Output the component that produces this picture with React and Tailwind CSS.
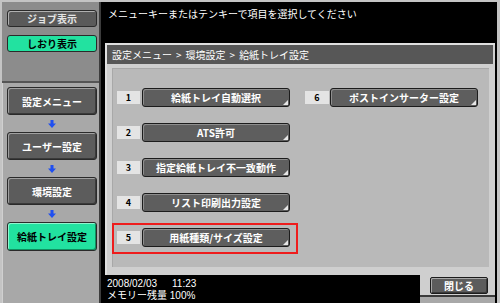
import React from 'react'

const FONT = "font-['Noto_Sans_CJK_JP','Noto_Sans',sans-serif]"

const LEFT_ITEMS = [
  { n: '1', label: '給紙トレイ自動選択' },
  { n: '2', label: 'ATS許可' },
  { n: '3', label: '指定給紙トレイ不一致動作' },
  { n: '4', label: 'リスト印刷出力設定' },
  { n: '5', label: '用紙種類/サイズ設定', marked: true },
]

const NAV = ['設定メニュー', 'ユーザー設定', '環境設定']

function DownArrow() {
  return (
    <svg width="8" height="8" viewBox="0 0 8 8">
      <path d="M2.5 0h3v3.5H8L4 8 0 3.5h2.5z" fill="#1f4ff0" />
    </svg>
  )
}

function SideButton({ children, green, h = 'h-[28px]' }) {
  return (
    <div
      className={`w-[90px] ${h} rounded-[3px] border border-[#2a2a2a] flex items-center justify-center text-[10px] font-bold ${
        green
          ? 'bg-[#22e2a0] text-black shadow-[inset_1px_1px_0_#8ff5cf,inset_-1px_-1px_0_#109060]'
          : 'bg-[#5c5c5c] text-white shadow-[inset_1px_1px_0_#a0a0a0,inset_-1px_-1px_0_#3a3a3a]'
      }`}
    >
      {children}
    </div>
  )
}

function MenuButton({ label }) {
  return (
    <div className="relative w-[148px] h-[19px] rounded-[3px] bg-[#5e5e5e] border border-[#1c1c1c] shadow-[inset_1px_1px_0_#8e8e8e] flex items-center justify-center text-white text-[10px] font-bold">
      {label}
      <span className="absolute right-[1px] bottom-[1px] w-0 h-0 border-l-[5px] border-l-transparent border-b-[5px] border-b-[#e6e6e6]" />
    </div>
  )
}

function Row({ n, label, marked }) {
  return (
    <div className="relative flex items-center gap-[2px]">
      <div className="w-[23px] h-[13px] bg-[#e4e4e4] flex items-center justify-center text-[9px] font-bold text-black">
        {n}
      </div>
      <MenuButton label={label} />
      {marked && (
        <div className="absolute -left-[5px] -top-[5px] w-[186px] h-[31px] border-2 border-[#ee1c1c]" />
      )}
    </div>
  )
}

export default function App() {
  return (
    <div className={`w-[500px] h-[303px] flex bg-[#c4c4c4] pt-[2px] pl-[2px] pr-[3px] overflow-hidden ${FONT}`}>
      {/* left sidebar */}
      <div className="w-[99px] flex flex-col border-r-2 border-[#3c3c3c]">
        <div className="h-[81px] bg-[#8c8c8c] border-b-2 border-[#555] flex flex-col gap-[8px] pt-[8px] pl-[5px]">
          <div className="w-[90px] h-[17px] rounded-[3px] bg-[#5a5a5a] border border-[#2a2a2a] shadow-[inset_1px_1px_0_#b0b0b0] flex items-center justify-center text-[10px] font-bold text-[#e4e4e4]">
            ジョブ表示
          </div>
          <div className="w-[90px] h-[17px] rounded-[3px] bg-[#22e2a0] border border-[#2a2a2a] flex items-center justify-center text-[10px] font-bold text-black">
            しおり表示
          </div>
        </div>
        <div className="flex-1 bg-[#a8a8a8] border-l border-[#d0d0d0] pt-[4px] pl-[4px] flex flex-col">
          {NAV.map((label) => (
            <React.Fragment key={label}>
              <SideButton>{label}</SideButton>
              <div className="w-[90px] h-[17px] flex items-center justify-center">
                <DownArrow />
              </div>
            </React.Fragment>
          ))}
          <SideButton green h="h-[29px]">給紙トレイ設定</SideButton>
        </div>
      </div>

      {/* main area */}
      <div className="flex-1 bg-black flex flex-col pl-[4px] pr-[2px]">
        <div className="h-[41px] pl-[3px] pt-[6px] text-[10px] leading-[12px] text-white">
          メニューキーまたはテンキーで項目を選択してください
        </div>

        <div className="h-[232px] bg-[#cfcfcf] border-t-2 border-l-2 border-[#e0e0e0] flex flex-col">
          <div className="h-[19px] bg-[#575757] mr-[2px] flex items-center pl-[5px] text-[10px] text-white">
            <span>設定メニュー</span>
            <span className="mx-[4px]">&gt;</span>
            <span>環境設定</span>
            <span className="mx-[4px]">&gt;</span>
            <span>給紙トレイ設定</span>
          </div>
          <div className="flex-1 pt-[4px] pl-[5px] pr-[6px] pb-[8px]">
            <div className="h-full bg-[#b9b9b9] border-t border-l border-[#a8a8a8] pt-[19px] pl-[4px] flex gap-[15px]">
              <div className="flex flex-col gap-[16px]">
                {LEFT_ITEMS.map((item) => (
                  <Row key={item.n} {...item} />
                ))}
              </div>
              <div className="flex flex-col">
                <div className="flex items-center gap-[1px]">
                  <div className="w-[24px] h-[13px] bg-[#e4e4e4] flex items-center justify-center text-[9px] font-bold text-black">
                    6
                  </div>
                  <MenuButton label="ポストインサーター設定" />
                </div>
              </div>
            </div>
          </div>
        </div>

        <div className="flex-1 flex">
          <div className="flex-1 pl-[2px] pt-[3px] text-[10px] leading-[12px] text-white font-['Liberation_Sans','Noto_Sans_CJK_JP',sans-serif]">
            <div className="flex">
              <span className="w-[65px]">2008/02/03</span>
              <span>11:23</span>
            </div>
            <div>メモリー残量 100%</div>
          </div>
          <div className="w-[75px] flex flex-col">
            <div className="h-[22px] bg-[#cfcfcf] border-b-2 border-[#3a3a3a] pl-[10px] pt-[2px]">
              <div className="w-[58px] h-[17px] rounded-[2px] bg-[#5c5c5c] border border-[#1c1c1c] shadow-[inset_1px_1px_0_#a8a8a8,inset_-1px_-1px_0_#3a3a3a] flex items-center justify-center text-[10px] font-bold text-white">
                閉じる
              </div>
            </div>
            <div className="flex-1 bg-[#a8a8a8]" />
          </div>
        </div>
      </div>
    </div>
  )
}
